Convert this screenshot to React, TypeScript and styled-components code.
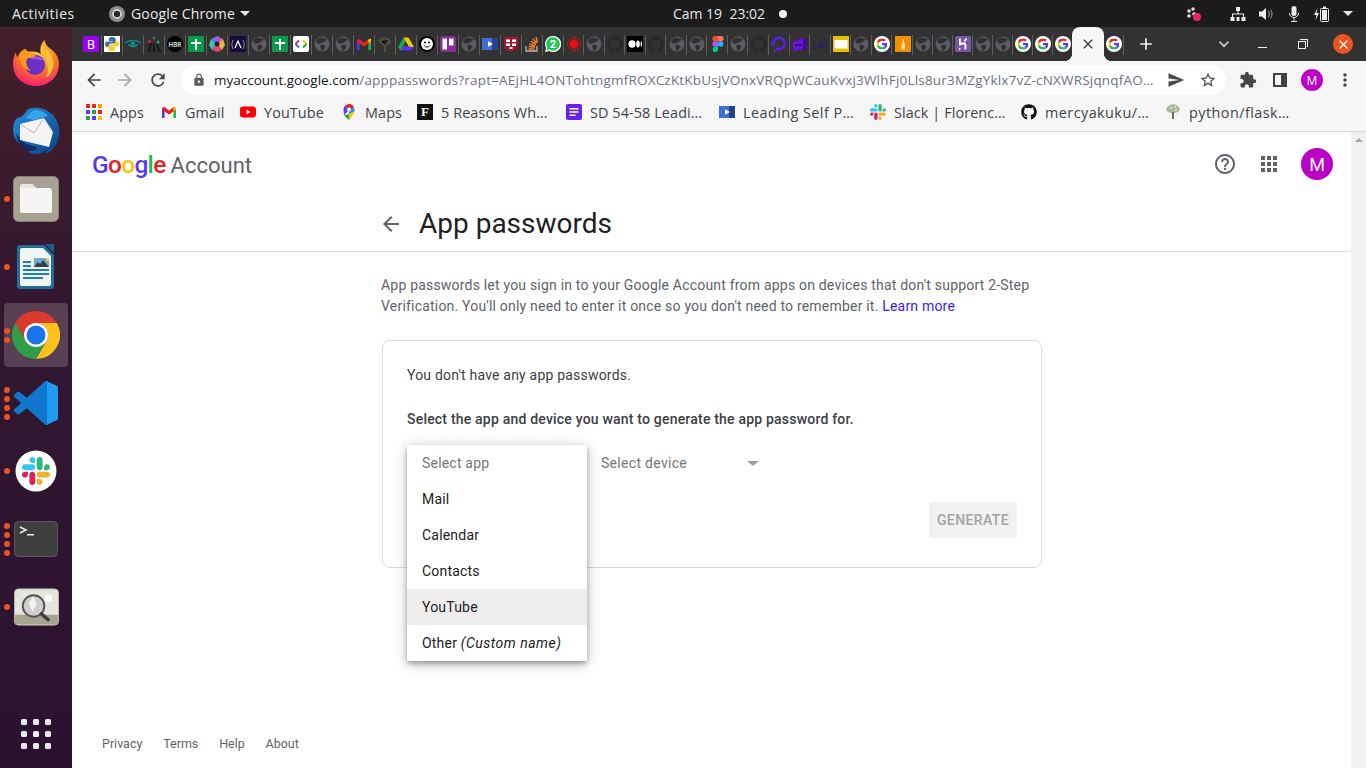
import React from 'react';
import styled, { createGlobalStyle } from 'styled-components';
import { MdArrowBack, MdArrowForward, MdRefresh, MdLock, MdStarBorder, MdExtension, MdSend, MdMoreVert, MdHelpOutline, MdApps, MdClose, MdAdd, MdExpandMore } from 'react-icons/md';
import { FaGithub } from 'react-icons/fa';

const GlobalStyle = createGlobalStyle`
    html, body { margin: 0; padding: 0; background: #1b1b1b; }
    * { box-sizing: border-box; }
    #root { width: 1366px; height: 768px; overflow: hidden; }
`;

const UI_FONT = `"Open Sans", "Noto Sans", sans-serif`;
const PAGE_FONT = `Roboto, "Liberation Sans", sans-serif`;

/* ---------- shared logos ---------- */

const GoogleG = () => (
    <g>
        <path fill="#ea1d25" d="M24 9.5c3.54 0 6.71 1.22 9.21 3.6l6.85-6.85C35.9 2.38 30.47 0 24 0 14.62 0 6.51 5.38 2.56 13.22l7.98 6.19C12.43 13.72 17.74 9.5 24 9.5z" />
        <path fill="#5a36f5" d="M46.98 24.55c0-1.57-.15-3.09-.38-4.55H24v9.02h12.94c-.58 2.96-2.26 5.48-4.78 7.18l7.73 6c4.51-4.18 7.09-10.36 7.09-17.65z" />
        <path fill="#f5c800" d="M10.53 28.59c-.48-1.45-.76-2.99-.76-4.59s.27-3.14.76-4.59l-7.98-6.19C.92 16.46 0 20.12 0 24c0 3.88.92 7.54 2.56 10.78l7.97-6.19z" />
        <path fill="#1fb84a" d="M24 48c6.48 0 11.93-2.13 16.03-5.81l-7.73-6c-2.15 1.45-4.92 2.3-8.3 2.3-6.26 0-11.57-4.22-13.47-9.91l-7.98 6.19C6.51 42.62 14.62 48 24 48z" />
    </g>
);

const SlackMark = () => (
    <g>
        <path fill="#e01e5a" d="M26.3 78.8c0 7.2-5.9 13.1-13.1 13.1S.1 86 .1 78.8c0-7.2 5.9-13.1 13.1-13.1h13.1v13.1zm6.6 0c0-7.2 5.9-13.1 13.1-13.1s13.1 5.9 13.1 13.1v32.8c0 7.2-5.9 13.1-13.1 13.1s-13.1-5.9-13.1-13.1V78.8z" />
        <path fill="#36c5f0" d="M46 26.3c-7.2 0-13.1-5.9-13.1-13.1S38.8.1 46 .1s13.1 5.9 13.1 13.1v13.1H46zm0 6.6c7.2 0 13.1 5.9 13.1 13.1s-5.9 13.1-13.1 13.1H13.1C5.9 59.1 0 53.2 0 46s5.9-13.1 13.1-13.1H46z" />
        <path fill="#2eb67d" d="M98.6 46c0-7.2 5.9-13.1 13.1-13.1s13.1 5.9 13.1 13.1-5.9 13.1-13.1 13.1H98.6V46zm-6.6 0c0 7.2-5.9 13.1-13.1 13.1S65.8 53.2 65.8 46V13.1C65.8 5.9 71.7 0 78.9 0S92 5.9 92 13.1V46z" />
        <path fill="#ecb22e" d="M78.9 98.6c7.2 0 13.1 5.9 13.1 13.1s-5.9 13.1-13.1 13.1-13.1-5.9-13.1-13.1V98.6h13.1zm0-6.6c-7.2 0-13.1-5.9-13.1-13.1s5.9-13.1 13.1-13.1h32.8c7.2 0 13.1 5.9 13.1 13.1S118.9 92 111.7 92H78.9z" />
    </g>
);

const GmailMark = () => (
    <g>
        <path fill="#5a36f5" d="M1 4.2 3.6 3v11H1z" />
        <path fill="#1fb84a" d="M12.4 3 15 4.2V14h-2.6z" />
        <path fill="#ea1d25" d="M3.6 3 8 6.8 12.4 3l2.6 1.2v1.6L8 10.6 1 5.8V4.2z" />
        <path fill="#f5c800" d="M12.4 3.6 15 2.6v2.8l-2.6 1.8z" />
    </g>
);

const VideoMark = () => (
    <g>
        <rect x="0" y="2" width="16" height="12" fill="#3c6fd0" />
        <rect x="10" y="2" width="6" height="12" fill="#27408f" />
        <path fill="#fff" d="M6 5.2 11 8l-5 2.8z" />
    </g>
);

/* ---------- favicons of the tab strip ---------- */

const Fav = styled.svg.attrs({ viewBox: '0 0 16 16' })`
    width: 16px;
    height: 16px;
    display: block;
    flex: none;
`;

const Favicon = ({ kind }: { kind: string }): JSX.Element => {
    switch (kind) {
        case 'b':
            return (
                <Fav>
                    <rect width="16" height="16" rx="1.5" fill="#9a00f5" />
                    <text x="8" y="12.6" textAnchor="middle" fontSize="13" fontFamily="Roboto" fill="#fff">B</text>
                </Fav>
            );
        case 'python':
            return (
                <Fav>
                    <rect width="16" height="16" fill="#fff" />
                    <path fill="#3a6fb0" d="M8 1C5 1 5 2.2 5 3.5V5h3.5v.6H3.3C2 5.6 1 6.7 1 8.3c0 1.7 1 2.8 2.2 2.8H5V9.4c0-1.1.9-2 2-2h3c1 0 1.700-.8 1.700-1.700V3.200C11.700 1.800 10 1 8 1z" />
                    <path fill="#f2d024" d="M8 15c3 0 3-1.200 3-2.500V11H7.500v-.6h5.200c1.300 0 2.300-1.100 2.300-2.700 0-1.700-1-2.800-2.200-2.800H11v1.700c0 1.100-.9 2-2 2H6c-1 0-1.700.8-1.700 1.700v2.500C4.300 14.200 6 15 8 15z" />
                </Fav>
            );
        case 'eye':
            return (
                <Fav>
                    <path fill="none" stroke="#0f8a80" strokeWidth="1.3" d="M0 7.5C3 3.5 13 3.5 16 7.5" />
                    <path fill="none" stroke="#0f8a80" strokeWidth="1.3" d="M3.5 8c1 3.5 8 3.500 9 0" />
                    <circle cx="8" cy="8" r="2.4" fill="#0f8a80" />
                </Fav>
            );
        case 'people':
            return (
                <Fav>
                    <rect y="15" width="16" height="1" fill="#222" />
                    <path stroke="#111" strokeWidth="1.5" d="M3 15 5 7M8 15V8M13 15l-2-7" />
                    <circle cx="8" cy="2" r="1.6" fill="#4a5fc0" />
                    <circle cx="3.5" cy="5.5" r="1.7" fill="#d81b2c" />
                    <circle cx="12" cy="6" r="1.5" fill="#2aa84a" />
                </Fav>
            );
        case 'hbr':
            return (
                <Fav>
                    <circle cx="8" cy="8" r="8" fill="#000" />
                    <text x="8" y="10.5" textAnchor="middle" fontSize="6.5" fontWeight="700" fontFamily="Roboto" fill="#ccc">HBR</text>
                </Fav>
            );
        case 'plus':
            return (
                <Fav>
                    <rect width="16" height="16" fill="#0a9a4a" />
                    <path fill="#fff" d="M7 3h2v3h4v2H9v6H7V8H3V6h4z" />
                </Fav>
            );
        case 'rainbow':
            return (
                <Fav>
                    <path fill="#c44ad8" d="M8 0 14 3v5H8z" />
                    <path fill="#e8b83a" d="M14 3 16 9l-3 5-5-6z" />
                    <path fill="#e0467a" d="M13 14 8 16 3 14l5-6z" />
                    <path fill="#3fc0a0" d="M3 14 0 9l2-6 6 5z" />
                    <path fill="#5a7bea" d="M2 3 8 0v8z" />
                    <circle cx="8" cy="8" r="2.5" fill="#2a1a40" />
                </Fav>
            );
        case 'astro':
            return (
                <Fav>
                    <rect width="16" height="16" fill="#1a0c3a" />
                    <path fill="none" stroke="#fff" strokeWidth="1.2" d="M5 12 8 5l3 7" />
                    <path fill="none" stroke="#8a8fb0" d="M3 4C1.5 7 1.5 10 3 13M13 4c1.500 3 1.500 6 0 9" />
                </Fav>
            );
        case 'globe':
            return (
                <Fav>
                    <circle cx="8" cy="8" r="7.5" fill="#5c5d62" />
                    <path fill="#2f3033" d="M6 1.5c3 .5 5 .5 7 2-1 1.500-2.500 1-3 2.500-1 1.500-3 .5-4 1.500C5 8.500 3 6.500 2 5.500 3 3 4.500 2 6 1.500zM7 9c1.500-.5 3 0 4 1s-.5 2.500-1.500 3.500c-.5 1-1 1.500-2 1.500 0-1.500-.5-2.500-1-3.500S6 9.500 7 9z" />
                </Fav>
            );
        case 'code':
            return (
                <Fav>
                    <rect width="16" height="16" rx="2" fill="#fff" />
                    <path fill="none" stroke="#e8332a" strokeWidth="1.8" d="M6 4.5 2.5 8" />
                    <path fill="none" stroke="#3a66e0" strokeWidth="1.8" d="M2.5 8 6 11.5" />
                    <path fill="none" stroke="#f4c400" strokeWidth="1.8" d="M10 4.5 13.5 8" />
                    <path fill="none" stroke="#1fa84a" strokeWidth="1.8" d="M13.5 8 10 11.5" />
                </Fav>
            );
        case 'gmail':
            return <Fav><GmailMark /></Fav>;
        case 'tree':
            return (
                <Fav>
                    <path fill="#4d5236" d="M7 16V10L3 7l-2-2 3-3 3-1 4 1 3 3-1 3-4 2v6z" />
                    <path stroke="#323232" d="M4 5l4 4 3-5M8 2v6" />
                </Fav>
            );
        case 'drive':
            return (
                <Fav>
                    <path fill="#1fa84a" d="M5.5 1.5 0 11l2.500 3.500L8 5z" />
                    <path fill="#f5c800" d="M5.5 1.5h5L16 11h-5z" />
                    <path fill="#5a36f5" d="M2.5 14.5 5.300 10 16 11l-2.500 3.500z" />
                </Fav>
            );
        case 'smile':
            return (
                <Fav>
                    <circle cx="8" cy="8" r="8" fill="#000" />
                    <circle cx="8" cy="8" r="6" fill="#fff" />
                    <circle cx="6" cy="6.5" r="1" fill="#000" />
                    <circle cx="10" cy="6.5" r="1" fill="#000" />
                    <path fill="none" stroke="#000" d="M5 9.5c1.500 2 4.500 2 6 0" />
                </Fav>
            );
        case 'trello':
            return (
                <Fav>
                    <rect width="16" height="16" rx="1.5" fill="#8a2a98" />
                    <rect x="2.5" y="2.5" width="4.5" height="11" fill="#fff" />
                    <rect x="9" y="2.5" width="4.5" height="7" fill="#fff" />
                </Fav>
            );
        case 'video':
            return <Fav><VideoMark /></Fav>;
        case 'harvard':
            return (
                <Fav>
                    <path fill="#9c1a2c" d="M1 1h14v9c0 3-3 4.500-7 6-4-1.500-7-3-7-6z" />
                    <path fill="#fff" d="M3 3.5h4V6H3zM9 3.5h4V6H9zM3 7.5h4V10H3zM9 7.5h4V10H9zM6.5 11h3v2h-3z" />
                </Fav>
            );
        case 'so':
            return (
                <Fav>
                    <path fill="none" stroke="#bcbbbb" strokeWidth="1.3" d="M2 10v5h11v-5" />
                    <path fill="none" stroke="#f48024" strokeWidth="1.5" d="M4.500 13h6M4.800 10.500l6 .8M5.500 8l5.700 2M7 5.300l5 3.200M9 2.800l3.600 4.500M12 1l1.500 5.500" />
                </Fav>
            );
        case 'whatsapp':
            return (
                <Fav>
                    <path fill="#fff" d="M8 0a8 8 0 0 0-6.900 12L0 16l4.200-1.100A8 8 0 1 0 8 0z" />
                    <path fill="#25c45a" d="M8 1.300A6.700 6.700 0 0 0 2.300 11.600l-.7 2.800 2.900-.8A6.700 6.700 0 1 0 8 1.300z" />
                    <text x="8" y="12" textAnchor="middle" fontSize="11" fontWeight="700" fontFamily="Roboto" fill="#fff">2</text>
                </Fav>
            );
        case 'record':
            return (
                <Fav>
                    <circle cx="8" cy="8" r="6.5" fill="none" stroke="#d81010" />
                    <circle cx="8" cy="8" r="4.5" fill="#e80f0f" />
                </Fav>
            );
        case 'gh':
            return (
                <Fav>
                    <path fill="#26282c" d="M8 .2a8 8 0 0 0-2.500 15.600c.4.100.5-.2.500-.4v-1.400c-2.200.5-2.700-1-2.700-1-.4-.9-.9-1.200-.9-1.200-.7-.5.100-.5.100-.5.800.100 1.200.8 1.200.8.700 1.200 1.900.9 2.300.7.100-.5.300-.9.500-1.100-1.800-.2-3.700-.9-3.700-4 0-.9.300-1.600.8-2.100-.1-.2-.4-1 .1-2.100 0 0 .7-.2 2.200.8a7.600 7.600 0 0 1 4 0c1.500-1 2.200-.8 2.200-.8.400 1.100.2 1.900.1 2.100.5.600.8 1.300.8 2.100 0 3.100-1.900 3.800-3.700 4 .3.300.6.800.6 1.500v2.200c0 .2.100.5.600.4A8 8 0 0 0 8 .2z" />
                </Fav>
            );
        case 'medium':
            return (
                <Fav>
                    <rect width="16" height="16" fill="#000" />
                    <ellipse cx="5" cy="8" rx="3.6" ry="3.8" fill="#fff" />
                    <ellipse cx="11" cy="8" rx="1.8" ry="3.5" fill="#fff" />
                    <ellipse cx="14.3" cy="8" rx=".7" ry="3" fill="#fff" />
                </Fav>
            );
        case 'figma':
            return (
                <Fav>
                    <path fill="#f24e1e" d="M8 0H5a2.600 2.600 0 0 0 0 5.300h3z" />
                    <path fill="#ff7262" d="M8 0h3a2.600 2.600 0 0 1 0 5.300H8z" />
                    <path fill="#a259ff" d="M8 5.300H5a2.600 2.600 0 0 0 0 5.400h3z" />
                    <circle cx="10.7" cy="8" r="2.7" fill="#1abcfe" />
                    <path fill="#0acf83" d="M5 10.700h3v2.700A2.700 2.700 0 1 1 5 10.700z" />
                </Fav>
            );
        case 'do':
            return (
                <Fav>
                    <path fill="none" stroke="#5a1ef0" strokeWidth="2.4" d="M8 13.300A5.800 5.800 0 1 0 2.700 10" />
                    <rect x="5" y="11.5" width="3" height="2.5" fill="#5a1ef0" />
                    <rect x="2.5" y="13.5" width="2" height="2" fill="#5a1ef0" />
                </Fav>
            );
        case 'box':
            return (
                <Fav>
                    <path fill="#6a10d8" d="M1 5.500 11 2v11l-10 2.500z" />
                    <path fill="#4a0aa0" d="M11 2l4 1.500v9L11 14z" />
                    <circle cx="4.5" cy="9" r="1.2" fill="#1a0c3a" />
                    <circle cx="8" cy="9" r="1.2" fill="#1a0c3a" />
                </Fav>
            );
        case 's':
            return (
                <Fav>
                    <path fill="none" stroke="#23205f" strokeWidth="1.2" d="M3 4C1 7 1.500 11 5 14M13 12c2-3 1.500-7-2-10" />
                    <text x="8.5" y="12" textAnchor="middle" fontSize="11" fontWeight="700" fontFamily="Roboto" fill="#23205f">s</text>
                </Fav>
            );
        case 'yellow':
            return (
                <Fav>
                    <rect width="16" height="16" fill="#e8c000" />
                    <rect x="1.5" y="4" width="13" height="8.5" fill="#fff" />
                </Fav>
            );
        case 'orange':
            return (
                <Fav>
                    <rect width="16" height="16" fill="#ee9200" />
                    <rect x="6.5" y="7" width="3.5" height="6.5" rx="1" fill="#f8dca8" />
                    <rect x="7.5" y="3" width="1.5" height="4" fill="#f8dca8" />
                </Fav>
            );
        case 'heroku':
            return (
                <Fav>
                    <rect width="16" height="16" rx="1.5" fill="#79589f" />
                    <path fill="#fff" d="M4 2.500h1.800v4.300c2-.8 4.200-1 5 .2.500.8.500 1.500.5 2.200v4.300h-1.800V9.300c0-1.200-2-1-5.500.4zM10 2.500h2c-.2 1.300-.8 2.200-1.700 3H8.500c.8-.8 1.300-1.800 1.500-3zM4 11.500l2 1.500-2 1.500z" />
                </Fav>
            );
        case 'g':
            return (
                <Fav>
                    <circle cx="8" cy="8" r="8" fill="#fff" />
                    <svg x="2.5" y="2.5" width="11" height="11" viewBox="0 0 48 48"><GoogleG /></svg>
                </Fav>
            );
        default:
            return <Fav />;
    }
};

const TAB_KINDS = [
    'b', 'python', 'eye', 'people', 'hbr', 'plus', 'rainbow', 'astro', 'globe', 'plus', 'code', 'globe',
    'globe', 'gmail', 'tree', 'drive', 'smile', 'trello', 'globe', 'video', 'harvard', 'so', 'whatsapp',
    'record', 'globe', 'gh', 'medium', 'gh', 'globe', 'globe', 'figma', 'globe', 'gh', 'do', 'box', 's',
    'yellow', 'globe', 'g', 'orange', 'globe', 'globe', 'heroku', 'globe', 'globe', 'g', 'g', 'g',
];

/* ---------- gnome top bar ---------- */

const TopBar = styled.header`
    height: 27px;
    background: #1b1b1b;
    display: grid;
    grid-template-columns: 1fr auto 1fr;
    align-items: center;
    color: #e9e9e9;
    font: 14px ${UI_FONT};
`;

const TopLeft = styled.div`
    display: flex;
    align-items: center;
    padding-left: 12px;
`;

const Activities = styled.span`
    width: 63px;
    letter-spacing: .5px;
`;

const AppMenu = styled.div`
    display: flex;
    align-items: center;
    gap: 6px;
    margin-left: 34px;
    letter-spacing: .15px;

    &::after {
        content: '';
        margin-left: -1px;
        border: 5px solid transparent;
        border-top: 5px solid #e9e9e9;
        border-bottom: 0;
    }
`;

const Clock = styled.div`
    display: flex;
    align-items: center;
    gap: 14px;
    white-space: pre;
    padding-left: 94px;

    &::after {
        content: '';
        width: 8px;
        height: 8px;
        border-radius: 50%;
        background: #f2f2f2;
    }
`;

const Tray = styled.div`
    display: flex;
    align-items: center;
    justify-content: flex-end;
    padding-right: 13px;
    gap: 12px;
`;

const TraySvg = styled.svg<{ $mr?: number }>`
    width: 16px;
    height: 16px;
    display: block;
    margin-right: ${(p) => p.$mr ?? 0}px;
`;

const TrayCaret = styled.span`
    border: 5px solid transparent;
    border-top: 5px solid #e9e9e9;
    border-bottom: 0;
    margin-left: 1px;
`;

/* ---------- dock ---------- */

const Dock = styled.nav`
    width: 72px;
    flex: none;
    display: flex;
    flex-direction: column;
    background: linear-gradient(180deg, #43202a 0%, #32172f 38%, #2b1231 100%);
    padding: 2px 0 0;
`;

const DockItem = styled.div<{ $active?: boolean }>`
    position: relative;
    height: 68px;
    display: flex;
    align-items: center;
    justify-content: center;

    &::before {
        content: '';
        position: absolute;
        inset: 2px 4px 2px 4px;
        border-radius: 4px;
        background: ${(p) => (p.$active ? 'rgba(255,255,255,.18)' : 'transparent')};
    }

    svg {
        position: relative;
        display: block;
    }
`;

const RunDots = styled.div`
    position: absolute;
    left: 4px;
    top: 0;
    bottom: 0;
    display: flex;
    flex-direction: column;
    justify-content: center;
    gap: 3px;
    z-index: 1;
`;

const RunDot = styled.i`
    width: 6px;
    height: 6px;
    border-radius: 50%;
    background: #e95420;
`;

const ShowApps = styled.div`
    margin: auto 0 19px 21px;
    display: grid;
    grid-template-columns: repeat(3, 6px);
    gap: 6px;
`;

const ShowAppsDot = styled.i`
    width: 6px;
    height: 6px;
    border-radius: 1.5px;
    background: #eee;
`;

const FirefoxIcon = () => (
    <svg width="46" height="46" viewBox="0 0 48 48">
        <defs>
            <radialGradient id="ffa" cx="55%" cy="25%" r="85%">
                <stop offset="0" stopColor="#ffd83a" />
                <stop offset=".5" stopColor="#ff7a1f" />
                <stop offset=".85" stopColor="#f5266e" />
                <stop offset="1" stopColor="#e8188f" />
            </radialGradient>
        </defs>
        <path fill="url(#ffa)" d="M33 0c1 5 3 7 7 10 5 4 8 9 8 15 0 13-10 23-24 23S0 38 0 25c0-5 1-9 3-12 0 2 1 4 2 5 1-5 5-8 8-9 1 2 3 3 4 3 5 0 9 0 12 3-1-6 0-12 4-15z" />
        <circle cx="23" cy="26" r="10.5" fill="#6b2fc4" />
        <path fill="#a05ce8" d="M17 19c5-3 12-2 15 3-4-2-10-2-15-3z" />
        <path fill="#ff9a1f" d="M6 15c5-2 11-3 16-1 2 1 2 3-1 4l-6 1c-2 3-2 9 4 13-7-1-11-6-11-11-1-1-2-4-2-6z" />
        <path fill="#ffc23a" d="M34 10c5 4 9 10 8 17-1 7-5 11-8 12 3-4 3-10 1-16-1-4-2-9-1-13z" />
    </svg>
);

const ThunderbirdIcon = () => (
    <svg width="48" height="48" viewBox="0 0 48 48">
        <defs>
            <linearGradient id="tba" x1="0" y1="0" x2="1" y2="1">
                <stop offset="0" stopColor="#2a8ee0" />
                <stop offset="1" stopColor="#0d3f86" />
            </linearGradient>
        </defs>
        <path fill="url(#tba)" d="M16 2c8-3 18-1 25 6 6 7 8 16 5 25-2 6-6 11-12 14-2-1 1-3 2-5-4 3-8 5-12 5-3 0-6-1-8-3 4 0 7-1 10-2l-8-2C9 39 4 35 2 29 0 22 1 16 5 11c4 0 7-3 11-9z" />
        <path fill="#0e2f6a" d="M4 26c3 6 10 13 22 14l-6 4C12 43 5 36 4 26z" />
        <path fill="#f4f4f4" d="M8 17 32 11 41 25 37 40 8 33z" />
        <path fill="none" stroke="#a8a8a8" strokeWidth=".8" d="M8 17 22 26 32 11" />
        <path fill="#36a6ec" d="M22 3c6 0 10 2 14 6l-14 4-8-2c2-3 5-6 8-8z" />
    </svg>
);

const FilesIcon = () => (
    <svg width="46" height="46" viewBox="0 0 46 46">
        <rect width="45" height="45" x=".5" y=".5" rx="5" fill="#a8a294" stroke="#85816f" />
        <path fill="#f6f5f3" d="M7 11a3 3 0 0 1 3-3h9l4 4h13a3 3 0 0 1 3 3v20a2 2 0 0 1-2 2H9a2 2 0 0 1-2-2z" />
        <path fill="#e6e4df" d="M7 11a3 3 0 0 1 3-3h9l4 4H7z" />
    </svg>
);

const WriterIcon = () => (
    <svg width="38" height="46" viewBox="0 0 38 46">
        <path fill="#1f6f9a" d="M3 1h24l10 10v31a3 3 0 0 1-3 3H3a3 3 0 0 1-3-3V4a3 3 0 0 1 3-3z" />
        <path fill="#f2f5f6" d="M5 4h21l8 8v28a2 2 0 0 1-2 2H5a2 2 0 0 1-2-2V6a2 2 0 0 1 2-2z" />
        <path fill="#1a5f88" d="M28 0h9v9z" />
        <path fill="#1f7fb0" d="M6 17h8v2H6zM6 21h8v2H6zM6 25h26v2H6zM6 29h26v2H6zM6 33h20v2H6z" />
        <rect x="17" y="14" width="15" height="9" fill="#6fa9d0" />
        <path fill="#3a3f44" d="M17 23l4-5 2 2 3-4 6 7z" />
        <rect x="29" y="14" width="3" height="3" fill="#f2c53a" />
    </svg>
);

const ChromeIcon = () => (
    <svg width="48" height="48" viewBox="0 0 48 48">
        <path fill="#db3a2e" d="M3.2 12A24 24 0 0 1 44.8 12H24A12 12 0 0 0 13.6 30z" />
        <path fill="#fcc21b" d="M44.8 12A24 24 0 0 1 24 48L34.4 30A12 12 0 0 0 24 12z" />
        <path fill="#2f9e48" d="M24 48A24 24 0 0 1 3.2 12L13.6 30A12 12 0 0 0 34.4 30z" />
        <circle cx="24" cy="24" r="12" fill="#fff" />
        <circle cx="24" cy="24" r="9.5" fill="#1a73e8" />
    </svg>
);

const VSCodeIcon = () => (
    <svg width="44" height="44" viewBox="0 0 100 100">
        <path fill="#0f78cc" d="M70.900 99.300a6.200 6.200 0 0 0 5-.2l20.500-9.900a6.200 6.200 0 0 0 3.500-5.600V16.400a6.200 6.200 0 0 0-3.500-5.600L75.900.9a6.200 6.200 0 0 0-7.100 1.200L29.400 38 12.300 25a4.200 4.200 0 0 0-5.300.2l-5.500 5a4.200 4.200 0 0 0 0 6.200L16.300 50 1.500 63.600a4.200 4.200 0 0 0 0 6.200l5.500 5a4.200 4.200 0 0 0 5.300.2l17.100-13 39.400 36a6.200 6.200 0 0 0 2.100 1.300zM75 27.200 45.100 50 75 72.800z" />
        <path fill="#1f9cf0" d="M75.900 99.100 96.400 89.200a6.200 6.200 0 0 0 3.500-5.600V16.400a6.200 6.200 0 0 0-3.500-5.600L75.900.9a6.200 6.200 0 0 0-7.100 1.200c2.300-2.300 6.200-.7 6.200 2.600v90.600c0 3.300-3.900 4.900-6.200 2.600a6.200 6.200 0 0 0 7.100 1.200z" />
    </svg>
);

const SlackDockIcon = () => (
    <svg width="42" height="42" viewBox="0 0 42 42">
        <circle cx="21" cy="21" r="20.5" fill="#fff" />
        <svg x="7" y="7" width="28" height="28" viewBox="0 0 125 125"><SlackMark /></svg>
    </svg>
);

const TerminalIcon = () => (
    <svg width="44" height="36" viewBox="0 0 44 36">
        <rect x=".5" y=".5" width="43" height="35" rx="4" fill="#3e3e3e" stroke="#5a5a5a" />
        <path fill="none" stroke="#eee" strokeWidth="1.6" d="M6 6l6 3-6 3" />
        <rect x="13" y="13" width="7" height="1.5" fill="#eee" />
    </svg>
);

const ViewerIcon = () => (
    <svg width="45" height="38" viewBox="0 0 46 38">
        <rect x=".5" y=".5" width="45" height="37" rx="4" fill="#e6e4dc" stroke="#b9b6a8" />
        <path fill="#a9a48f" d="M1 27h44v7a3 3 0 0 1-3 3H4a3 3 0 0 1-3-3z" />
        <circle cx="35" cy="10" r="4" fill="#fafafa" />
        <circle cx="20" cy="18" r="11" fill="#cfd0cd" stroke="#55555a" strokeWidth="2" />
        <path fill="#f4f4f4" d="M20 8l3 8-4 8-4-9z" />
        <path stroke="#3e3e42" strokeWidth="3.5" strokeLinecap="round" d="M28 26l7 6" />
    </svg>
);

const DOCK_APPS: { icon: JSX.Element; dots: number; active?: boolean }[] = [
    { icon: <FirefoxIcon />, dots: 0 },
    { icon: <ThunderbirdIcon />, dots: 0 },
    { icon: <FilesIcon />, dots: 1 },
    { icon: <WriterIcon />, dots: 1 },
    { icon: <ChromeIcon />, dots: 2, active: true },
    { icon: <VSCodeIcon />, dots: 4 },
    { icon: <SlackDockIcon />, dots: 1 },
    { icon: <TerminalIcon />, dots: 4 },
    { icon: <ViewerIcon />, dots: 1 },
];

/* ---------- chrome window ---------- */

const Shell = styled.div`
    width: 1366px;
    height: 768px;
    display: flex;
    flex-direction: column;
`;

const Desktop = styled.div`
    flex: 1;
    min-height: 0;
    display: flex;
`;

const Chrome = styled.div`
    flex: 1;
    min-width: 0;
    display: flex;
    flex-direction: column;
    background: #fff;
`;

const TabStrip = styled.div`
    height: 34px;
    background: #323232;
    display: flex;
    align-items: center;
    padding-left: 8.5px;
    color: #f1f1f1;
`;

const TabSlot = styled.div<{ $tier: number }>`
    position: relative;
    width: ${(p) => [21, 20.55, 20][p.$tier]}px;
    height: 100%;
    display: flex;
    align-items: center;
    justify-content: center;
    flex: none;

    &::after {
        content: '';
        position: absolute;
        right: 0;
        top: 8px;
        bottom: 6px;
        width: 1px;
        background: #5e5e5e;
    }
`;

const ActiveTab = styled.div`
    position: relative;
    width: 32px;
    height: 100%;
    flex: none;
    margin-left: -.65px;
    background: #f6f6f6;
    border-radius: 8px 8px 0 0;
    display: flex;
    align-items: center;
    justify-content: center;
    color: #3c3c3c;
    z-index: 1;
    font-size: 16px;

    &::before, &::after {
        content: '';
        position: absolute;
        bottom: 0;
        width: 8px;
        height: 8px;
    }
    &::before {
        left: -8px;
        background: radial-gradient(circle at 0 0, transparent 8px, #f6f6f6 8.5px);
    }
    &::after {
        right: -8px;
        background: radial-gradient(circle at 100% 0, transparent 8px, #f6f6f6 8.5px);
    }
`;

const NewTab = styled.div`
    margin-left: 12px;
    font-size: 20px;
    display: flex;
    color: #f4f4f4;
`;

const WindowControls = styled.div`
    margin-left: auto;
    padding-right: 13px;
    display: flex;
    align-items: center;
`;

const TabSearch = styled.div`
    font-size: 20px;
    display: flex;
    color: #dcdcdc;
    margin-right: 24px;
`;

const MinimizeBtn = styled.i`
    width: 9px;
    height: 1.5px;
    background: #eee;
    margin: 7px 31px 0 0;
`;

const RestoreBtn = styled.i`
    position: relative;
    width: 8px;
    height: 8px;
    border: 1px solid #eee;
    margin: 2px 27px 0 0;

    &::after {
        content: '';
        position: absolute;
        left: 1px;
        top: -3px;
        width: 7px;
        height: 7px;
        border: 1px solid #eee;
        border-left: 0;
        border-bottom: 0;
    }
`;

const CloseBtn = styled.div`
    width: 20px;
    height: 20px;
    border-radius: 50%;
    background: #e95420;
    color: #fff;
    font-size: 15px;
    display: flex;
    align-items: center;
    justify-content: center;
`;

const Toolbar = styled.div`
    height: 38px;
    background: #f6f6f6;
    display: flex;
    align-items: center;
    color: #45474a;
    padding: 0 0 0 12px;
`;

const NavBtn = styled.div<{ $muted?: boolean; $w?: number; $size?: number }>`
    width: ${(p) => p.$w ?? 31}px;
    display: flex;
    justify-content: center;
    font-size: ${(p) => p.$size ?? 20}px;
    color: ${(p) => (p.$muted ? '#a6a7a9' : '#45474a')};
    flex: none;
`;

const Omnibox = styled.div`
    width: 1046px;
    height: 30px;
    margin: 0 4px 0 10px;
    border-radius: 15px;
    background: #fff;
    display: flex;
    align-items: center;
    padding: 0 6px 0 12px;
    flex: none;
`;

const LockSlot = styled.div`
    font-size: 14px;
    color: #5a5d62;
    display: flex;
    width: 22px;
    flex: none;
`;

const Url = styled.div`
    flex: 1;
    min-width: 0;
    white-space: nowrap;
    font: 13.5px ${UI_FONT};
    letter-spacing: .2px;
    color: #6f6f80;
`;

const Host = styled.span`
    color: #14141c;
    letter-spacing: 0;
`;

const OmniBtn = styled.div<{ $w: number }>`
    width: ${(p) => p.$w}px;
    display: flex;
    justify-content: center;
    font-size: 18px;
    color: #45474a;
    flex: none;
`;

const ProfileDot = styled.div`
    width: 22px;
    height: 22px;
    border-radius: 50%;
    background: #b900c4;
    color: #fff;
    font: 12px ${UI_FONT};
    display: flex;
    align-items: center;
    justify-content: center;
    margin: 0 4px 0 7px;
    flex: none;
`;

const SidePanelIcon = styled.i`
    width: 14px;
    height: 14px;
    border: 2px solid #3f4144;
    border-right-width: 6px;
    display: block;
`;

const Bookmarks = styled.div`
    height: 33px;
    background: #f6f6f6;
    border-bottom: 1px solid #d8d8d8;
    display: flex;
    align-items: center;
    padding: 0 0 6px 14px;
    gap: 16px;
    color: #414347;
    font: 14.4px ${UI_FONT};
    letter-spacing: .1px;
`;

const Bookmark = styled.div`
    display: flex;
    align-items: center;
    gap: 8px;
    flex: none;
`;

const BookmarkLabel = styled.span<{ $w: number; $stretch?: boolean }>`
    width: ${(p) => p.$w}px;
    white-space: nowrap;
    letter-spacing: ${(p) => (p.$stretch ? '.45px' : 'inherit')};
`;

const BookmarkGlyph = styled.div`
    width: 16px;
    height: 16px;
    display: flex;
    align-items: center;
    justify-content: center;
    font-size: 16px;
    color: #111;
`;

const AppsGrid = styled.div`
    display: grid;
    grid-template-columns: repeat(3, 4px);
    gap: 2px;
`;

const AppsCell = styled.i<{ $c: string }>`
    width: 4px;
    height: 4px;
    background: ${(p) => p.$c};
`;

const APPS_COLORS = ['#e8281d', '#e8281d', '#f1a400', '#5a36f5', '#1fa84a', '#e8281d', '#1fa84a', '#5a36f5', '#f5c800'];

const FormsIcon = () => (
    <Fav>
        <rect width="16" height="16" rx="2" fill="#6a1ef0" />
        <path fill="#fff" d="M3.5 4h9v1.600h-9zM3.500 7.200h9v1.600h-9zM3.500 10.400h6v1.600h-6z" />
    </Fav>
);

const MapsPin = () => (
    <Fav>
        <path fill="#1fa84a" d="M3 11c1 2 3 3 5 5l2-6z" />
        <path fill="#f5c800" d="M8 16c2-3 5-5 5.500-9L8 10z" />
        <path fill="#ea1d25" d="M8 0a5.500 5.500 0 0 0-4 1.700L8 6l5-2a5.500 5.500 0 0 0-5-4z" />
        <path fill="#5a36f5" d="M4 1.700A5.500 5.500 0 0 0 2.500 5.500c0 2 .5 4 .5 5.500l5-5z" />
        <path fill="#1c8cf0" d="M13 4c.4.700.5 1.800.5 3L8 10l-.5-4z" />
        <circle cx="8" cy="5.5" r="2" fill="#fff" />
    </Fav>
);

const YoutubeIcon = () => (
    <Fav>
        <rect y="2.5" width="16" height="11" rx="3" fill="#f00" />
        <path fill="#fff" d="M6.500 5.500 10.500 8l-4 2.500z" />
    </Fav>
);

const SlackBookmark = () => (
    <Fav>
        <svg width="16" height="16" viewBox="0 0 125 125"><SlackMark /></svg>
    </Fav>
);

const FBox = styled.div`
    width: 16px;
    height: 16px;
    background: #111;
    color: #fff;
    font: 700 13px "Liberation Serif", serif;
    display: flex;
    align-items: center;
    justify-content: center;
`;

const TreeIcon = () => (
    <Fav>
        <path fill="#a9bb98" d="M8 0 11 1l3 2 1 3-2 2-3 1H6L3 8 1 6l1-3 3-2z" />
        <path fill="#7a6a52" d="M7 8h2v7H7z" />
        <path fill="#d4dcc8" d="M5 3h2v2H5zM9 2h2v2H9zM10 5h2v2h-2z" />
    </Fav>
);

const BOOKMARKS: { icon: JSX.Element; label: string; w: number; stretch?: boolean }[] = [
    { icon: <AppsGrid>{APPS_COLORS.map((c, i) => <AppsCell key={i} $c={c} />)}</AppsGrid>, label: 'Apps', w: 35 },
    { icon: <Fav><GmailMark /></Fav>, label: 'Gmail', w: 39 },
    { icon: <YoutubeIcon />, label: 'YouTube', w: 61 },
    { icon: <MapsPin />, label: 'Maps', w: 36 },
    { icon: <FBox>F</FBox>, label: '5 Reasons Wh…', w: 109 },
    { icon: <FormsIcon />, label: 'SD 54-58 Leadi…', w: 113 },
    { icon: <Fav><VideoMark /></Fav>, label: 'Leading Self P…', w: 111, stretch: true },
    { icon: <SlackBookmark />, label: 'Slack | Florenc…', w: 111 },
    { icon: <FaGithub />, label: 'mercyakuku/…', w: 104, stretch: true },
    { icon: <TreeIcon />, label: 'python/flask…', w: 104, stretch: true },
];

/* ---------- google account page ---------- */

const Viewport = styled.div`
    flex: 1;
    min-height: 0;
    display: flex;
`;

const Page = styled.main`
    flex: 1;
    min-width: 0;
    display: flex;
    flex-direction: column;
    font-family: ${PAGE_FONT};
`;

const Scrollbar = styled.div`
    width: 15px;
    flex: none;
    background: #f1f1f1;
    display: flex;
    justify-content: center;
    padding-top: 6px;

    &::before {
        content: '';
        width: 0;
        height: 0;
        border: 4px solid transparent;
        border-bottom: 4px solid #a3a3a3;
        border-top: 0;
    }
`;

const AccountBar = styled.div`
    height: 64px;
    display: flex;
    align-items: center;
    padding: 0 18px 0 20px;
`;

const Wordmark = styled.div`
    margin-top: 2px;
    font: 500 24.5px/1 Roboto, sans-serif;
    letter-spacing: -.7px;
    display: flex;
    align-items: baseline;
`;

const Letter = styled.span<{ $c: string }>`
    color: ${(p) => p.$c};
`;

const Product = styled.span`
    margin-left: 5px;
    font: 400 22px/1 Roboto, sans-serif;
    letter-spacing: 0;
    color: #5f6368;
`;

const AccountActions = styled.div`
    margin-left: auto;
    display: flex;
    align-items: center;
    color: #5f6368;
`;

const ActionIcon = styled.div`
    width: 24px;
    height: 24px;
    font-size: 24px;
    display: flex;
    margin-right: 20px;
`;

const AccountAvatar = styled.div`
    width: 32px;
    height: 32px;
    border-radius: 50%;
    background: #b900c4;
    color: #fff;
    font: 400 18px Roboto, sans-serif;
    display: flex;
    align-items: center;
    justify-content: center;
`;

const TitleBar = styled.div`
    height: 56px;
    border-bottom: 1px solid #dadce0;
    display: flex;
    justify-content: center;
    padding-left: 1px;
`;

const Column = styled.div`
    width: 660px;
    flex: none;
`;

const TitleRow = styled(Column)`
    display: flex;
    align-items: center;
    padding-top: 1px;
    gap: 16px;
`;

const BackBtn = styled.div`
    font-size: 24px;
    display: flex;
    color: #5f6368;
    margin-left: -3px;
`;

const Title = styled.h1`
    margin: 0;
    font: 400 28px/1.2 Roboto, sans-serif;
    color: #202124;
`;

const Body = styled.div`
    flex: 1;
    min-height: 0;
    display: flex;
    justify-content: center;
    padding: 23px 0 0 1px;
`;

const Intro = styled.p`
    margin: 0 0 23px -1px;
    font-size: 14px;
    line-height: 21px;
    letter-spacing: .2px;
    color: #5f6368;
    white-space: nowrap;
`;

const LearnMore = styled.a`
    color: #3a1af0;
`;

const Card = styled.section`
    height: 228px;
    border: 1px solid #dadce0;
    border-radius: 8px;
    padding: 23px 24px 0;
    color: #3c4043;
`;

const CardLine = styled.p<{ $strong?: boolean }>`
    margin: 0 0 22px;
    font-size: 14px;
    line-height: 22px;
    letter-spacing: .2px;
    font-weight: ${(p) => (p.$strong ? 500 : 400)};
`;

const Selects = styled.div`
    display: flex;
    height: 36px;
    margin-top: -7px;
`;

const SelectBox = styled.div`
    position: relative;
    width: 180px;
    margin-right: 14px;
    flex: none;
`;

const Menu = styled.div`
    position: absolute;
    left: 0;
    top: 0;
    width: 180px;
    background: #fff;
    box-shadow: 0 2px 4px -1px rgba(0,0,0,.2), 0 4px 5px rgba(0,0,0,.14), 0 1px 10px rgba(0,0,0,.12), 0 3px 14px rgba(0,0,0,.15);
    z-index: 2;
`;

const MenuItem = styled.div<{ $placeholder?: boolean; $hover?: boolean }>`
    height: 36px;
    padding-left: 15px;
    display: flex;
    align-items: center;
    font-size: 14px;
    letter-spacing: .2px;
    color: ${(p) => (p.$placeholder ? '#757575' : '#212121')};
    background: ${(p) => (p.$hover ? '#eeeeee' : '#fff')};
    white-space: pre;

    em {
        font-style: italic;
        letter-spacing: .5px;
    }
`;

const DeviceSelect = styled.div`
    width: 158px;
    display: flex;
    align-items: center;
    justify-content: space-between;
    font-size: 14px;
    letter-spacing: .3px;
    color: #757575;

    &::after {
        content: '';
        border: 6px solid transparent;
        border-top: 5px solid #9e9e9e;
        border-bottom: 0;
    }
`;

const CardActions = styled.div`
    display: flex;
    justify-content: flex-end;
    margin-top: 21px;
`;

const GenerateBtn = styled.div`
    width: 88px;
    height: 36px;
    border-radius: 2px;
    background: #f1f1f1;
    color: #a3a3a3;
    font-size: 14px;
    font-weight: 500;
    letter-spacing: .4px;
    display: flex;
    align-items: center;
    justify-content: center;
`;

const Footer = styled.footer`
    display: flex;
    gap: 20.8px;
    padding: 0 0 17px 30px;
    font-size: 12.5px;
    line-height: 15px;
    color: #5f6368;
`;

const GOOGLE_LETTERS: [string, string][] = [
    ['G', '#5a36f5'], ['o', '#ea1d25'], ['o', '#f5c800'], ['g', '#5a36f5'], ['l', '#1fb84a'], ['e', '#ea1d25'],
];

const URL_REST = '/apppasswords?rapt=AEjHL4ONTohtngmfROXCzKtKbUsjVOnxVRQpWCauKvxj3WlhFj0Lls8ur3MZgYklx7vZ-cNXWRSjqnqfAO…';

const App = (): JSX.Element => {
    return (
        <Shell>
            <GlobalStyle />
            <TopBar>
                <TopLeft>
                    <Activities>Activities</Activities>
                    <AppMenu>
                        <svg width="16" height="16" viewBox="0 0 16 16">
                            <circle cx="8" cy="8" r="8" fill="#8c8c8c" />
                            <circle cx="8" cy="8" r="4" fill="#2a2a2a" stroke="#e8e8e8" strokeWidth="1.5" />
                        </svg>
                        Google Chrome
                    </AppMenu>
                </TopLeft>
                <Clock>{'Cam 19  23:02'}</Clock>
                <Tray>
                    <TraySvg viewBox="0 0 16 16" $mr={16}>
                        <circle cx="3" cy="5" r="1.8" fill="#ddd" />
                        <circle cx="7" cy="3" r="1.8" fill="#ddd" />
                        <circle cx="3" cy="10" r="1.8" fill="#ddd" />
                        <circle cx="8" cy="8" r="1.8" fill="#ddd" />
                        <circle cx="11" cy="11" r="4" fill="#f0246e" />
                    </TraySvg>
                    <TraySvg viewBox="0 0 16 16">
                        <path fill="#eee" d="M6 1h4v4H8.500v2.500H14V11h1.500v4h-4v-4H13V8.500H3V11h1.500v4h-4v-4H2V7.500h5.500V5H6zM6.500 11h3v4h-3z" />
                    </TraySvg>
                    <TraySvg viewBox="0 0 16 16">
                        <path fill="#eee" d="M1 5.500h3L8 2v12L4 10.500H1z" />
                        <path fill="none" stroke="#aaa" d="M10.500 5c1 1.500 1 4.500 0 6M12.500 3.500c2 2.500 2 6.500 0 9" />
                    </TraySvg>
                    <TraySvg viewBox="0 0 16 16">
                        <rect x="5.5" y="0" width="5" height="10" rx="2.5" fill="#eee" />
                        <path fill="none" stroke="#eee" d="M3.500 7c0 6 9 6 9 0M8 12v3M5 15.500h6" />
                    </TraySvg>
                    <TraySvg viewBox="0 0 16 16">
                        <path fill="#eee" d="M3.500 2 0 9h2.500L1.500 14 5 7H2.500z" />
                        <rect x="6.5" y="2.5" width="8" height="13" rx="1" fill="none" stroke="#eee" />
                        <rect x="9" y="0.5" width="3" height="2" fill="#eee" />
                        <rect x="8" y="4" width="5" height="10" fill="#eee" />
                    </TraySvg>
                    <TrayCaret />
                </Tray>
            </TopBar>
            <Desktop>
                <Dock>
                    {DOCK_APPS.map((app, i) => (
                        <DockItem key={i} $active={app.active}>
                            {app.dots > 0 && (
                                <RunDots>
                                    {Array.from({ length: app.dots }).map((_, d) => <RunDot key={d} />)}
                                </RunDots>
                            )}
                            {app.icon}
                        </DockItem>
                    ))}
                    <ShowApps>
                        {Array.from({ length: 9 }).map((_, i) => <ShowAppsDot key={i} />)}
                    </ShowApps>
                </Dock>
                <Chrome>
                    <TabStrip>
                        {TAB_KINDS.map((kind, i) => (
                            <TabSlot key={i} $tier={i < 23 ? 0 : i < 40 ? 1 : 2}>
                                <Favicon kind={kind} />
                            </TabSlot>
                        ))}
                        <ActiveTab><MdClose /></ActiveTab>
                        <TabSlot $tier={2}><Favicon kind="g" /></TabSlot>
                        <NewTab><MdAdd /></NewTab>
                        <WindowControls>
                            <TabSearch><MdExpandMore /></TabSearch>
                            <MinimizeBtn />
                            <RestoreBtn />
                            <CloseBtn><MdClose /></CloseBtn>
                        </WindowControls>
                    </TabStrip>
                    <Toolbar>
                        <NavBtn $w={20}><MdArrowBack /></NavBtn>
                        <NavBtn $muted $w={42}><MdArrowForward /></NavBtn>
                        <NavBtn $w={24}><MdRefresh /></NavBtn>
                        <Omnibox>
                            <LockSlot><MdLock /></LockSlot>
                            <Url><Host>myaccount.google.com</Host>{URL_REST}</Url>
                            <OmniBtn $w={40}><MdSend /></OmniBtn>
                            <OmniBtn $w={24}><MdStarBorder /></OmniBtn>
                        </Omnibox>
                        <NavBtn $w={36} $size={18}><MdExtension /></NavBtn>
                        <NavBtn $w={28}><SidePanelIcon /></NavBtn>
                        <ProfileDot>M</ProfileDot>
                        <NavBtn $w={36}><MdMoreVert /></NavBtn>
                    </Toolbar>
                    <Bookmarks>
                        {BOOKMARKS.map((b) => (
                            <Bookmark key={b.label}>
                                <BookmarkGlyph>{b.icon}</BookmarkGlyph>
                                <BookmarkLabel $w={b.w} $stretch={b.stretch}>{b.label}</BookmarkLabel>
                            </Bookmark>
                        ))}
                    </Bookmarks>
                    <Viewport>
                        <Page>
                            <AccountBar>
                                <Wordmark>
                                    {GOOGLE_LETTERS.map(([l, c], i) => <Letter key={i} $c={c}>{l}</Letter>)}
                                    <Product>Account</Product>
                                </Wordmark>
                                <AccountActions>
                                    <ActionIcon><MdHelpOutline /></ActionIcon>
                                    <ActionIcon><MdApps /></ActionIcon>
                                    <AccountAvatar>M</AccountAvatar>
                                </AccountActions>
                            </AccountBar>
                            <TitleBar>
                                <TitleRow>
                                    <BackBtn><MdArrowBack /></BackBtn>
                                    <Title>App passwords</Title>
                                </TitleRow>
                            </TitleBar>
                            <Body>
                                <Column>
                                    <Intro>
                                        App passwords let you sign in to your Google Account from apps on devices that don't support 2-Step<br />
                                        Verification. You'll only need to enter it once so you don't need to remember it. <LearnMore>Learn more</LearnMore>
                                    </Intro>
                                    <Card>
                                        <CardLine>You don't have any app passwords.</CardLine>
                                        <CardLine $strong>Select the app and device you want to generate the app password for.</CardLine>
                                        <Selects>
                                            <SelectBox>
                                                <Menu>
                                                    <MenuItem $placeholder>Select app</MenuItem>
                                                    <MenuItem>Mail</MenuItem>
                                                    <MenuItem>Calendar</MenuItem>
                                                    <MenuItem>Contacts</MenuItem>
                                                    <MenuItem $hover>YouTube</MenuItem>
                                                    <MenuItem>Other <em>(Custom name)</em></MenuItem>
                                                </Menu>
                                            </SelectBox>
                                            <DeviceSelect>Select device</DeviceSelect>
                                        </Selects>
                                        <CardActions>
                                            <GenerateBtn>GENERATE</GenerateBtn>
                                        </CardActions>
                                    </Card>
                                </Column>
                            </Body>
                            <Footer>
                                <span>Privacy</span>
                                <span>Terms</span>
                                <span>Help</span>
                                <span>About</span>
                            </Footer>
                        </Page>
                        <Scrollbar />
                    </Viewport>
                </Chrome>
            </Desktop>
        </Shell>
    );
};

export default App;
